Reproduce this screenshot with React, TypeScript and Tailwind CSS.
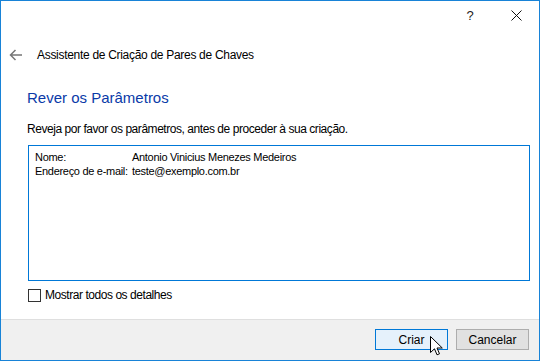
import React from "react";

function BackArrow() {
  return (
    <svg width="14" height="12" viewBox="0 0 14 12" fill="none">
      <path d="M13 6H1.5M6.5 1L1.5 6l5 5" stroke="#767676" strokeWidth="1.5" />
    </svg>
  );
}

function CloseGlyph() {
  return (
    <svg width="11" height="11" viewBox="0 0 11 11" fill="none">
      <path d="M0.5 0.5l10 10M10.5 0.5l-10 10" stroke="#111" strokeWidth="1" />
    </svg>
  );
}

function Pointer() {
  return (
    <svg width="13" height="20" viewBox="0 0 13 20" fill="none">
      <path
        d="M0.5 0.5V16.5L4.5 12.8L7 18.8L9.5 17.8L7 12H12.3Z"
        fill="#fff"
        stroke="#000"
        strokeWidth="1"
        strokeLinejoin="round"
      />
    </svg>
  );
}

export default function App() {
  return (
    <div className="relative flex h-[361px] w-[540px] flex-col overflow-hidden border border-[#1883d7] bg-white font-['Liberation_Sans',Arial,sans-serif] text-black">
      <div className="flex h-[29px] shrink-0 justify-end">
        <div className="flex w-[46px] items-center justify-center text-[13px] text-[#222]">?</div>
        <div className="flex w-[46px] items-center justify-center">
          <CloseGlyph />
        </div>
      </div>

      <div className="flex h-[50px] shrink-0 items-center">
        <div className="ml-[8px] flex w-[28px]">
          <BackArrow />
        </div>
        <span className="text-[12px] tracking-[-0.3px]">Assistente de Criação de Pares de Chaves</span>
      </div>

      <div className="flex flex-1 flex-col pl-[26px]">
        <h1 className="mt-[8px] text-[15px] leading-[20px] text-[#0a3aa8]">Rever os Parâmetros</h1>
        <p className="mt-[13px] text-[12px] leading-[16px] tracking-[-0.45px]">
          Reveja por favor os parâmetros, antes de proceder à sua criação.
        </p>
        <div className="ml-[1px] mt-[8px] h-[136px] w-[502px] border border-[#0078d7] pl-[6px] pt-[4px] text-[11px] leading-[14px] tracking-[-0.3px]">
          <div className="flex">
            <span className="w-[97px] shrink-0 whitespace-nowrap">Nome:</span>
            <span>Antonio Vinicius Menezes Medeiros</span>
          </div>
          <div className="flex">
            <span className="w-[97px] shrink-0 whitespace-nowrap">Endereço de e-mail:</span>
            <span>teste@exemplo.com.br</span>
          </div>
        </div>
        <label className="ml-[1px] mt-[8px] flex items-center gap-[4px] text-[12px] tracking-[-0.45px]">
          <span className="h-[13px] w-[13px] border border-[#333] bg-white" />
          <span className="leading-[13px]">Mostrar todos os detalhes</span>
        </label>
      </div>

      <div className="flex h-[41px] shrink-0 items-start justify-end gap-[8px] border-t border-[#dfdfdf] bg-[#f0f0f0] pr-[10px] pt-[9px]">
        <button className="flex h-[21px] w-[73px] items-center justify-center border border-[#0078d7] bg-[#e5f1fb] text-[12px]">
          Criar
        </button>
        <button className="flex h-[21px] w-[73px] items-center justify-center border border-[#adadad] bg-[#e1e1e1] text-[12px]">
          Cancelar
        </button>
      </div>

      <div className="absolute left-[429px] top-[335px]">
        <Pointer />
      </div>
    </div>
  );
}
